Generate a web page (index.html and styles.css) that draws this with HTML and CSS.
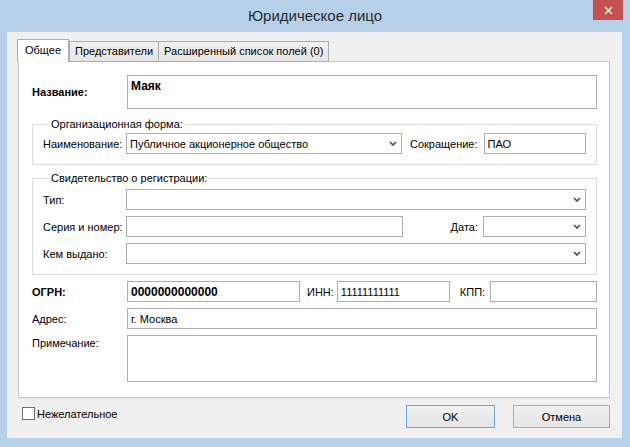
FILE: index.html
```html
<!DOCTYPE html>
<html lang="ru">
<head>
<meta charset="utf-8">
<title>Юридическое лицо</title>
<link rel="stylesheet" href="styles.css">
</head>
<body>
<div class="window">
  <div class="titlebar">
    <span class="title">Юридическое лицо</span>
    <div class="close"><svg width="9" height="9" viewBox="0 0 9 9"><path d="M1 1L8 8M8 1L1 8" stroke="#fff" stroke-width="1.4"/></svg></div>
  </div>
  <div class="client">
    <div class="tabs">
      <div class="tab active">Общее</div>
      <div class="tab">Представители</div>
      <div class="tab">Расширенный список полей (0)</div>
    </div>
    <div class="panel">
      <div class="row row-name">
        <div class="lbl bold">Название:</div>
        <div class="field area bold val">Маяк</div>
      </div>

      <fieldset class="group g1">
        <legend>Организационная форма:</legend>
        <div class="row">
          <div class="glbl">Наименование:</div>
          <div class="field select w-org"><span>Публичное акционерное общество</span><svg class="chev" width="8" height="5" viewBox="0 0 8 5"><path d="M1 1L4 4L7 1" fill="none" stroke="#4a4a4a" stroke-width="1.6"/></svg></div>
          <div class="mlbl">Сокращение:</div>
          <div class="field grow">ПАО</div>
        </div>
      </fieldset>

      <fieldset class="group g2">
        <legend>Свидетельство о регистрации:</legend>
        <div class="row">
          <div class="glbl">Тип:</div>
          <div class="field select grow"><span></span><svg class="chev" width="8" height="5" viewBox="0 0 8 5"><path d="M1 1L4 4L7 1" fill="none" stroke="#4a4a4a" stroke-width="1.6"/></svg></div>
        </div>
        <div class="row">
          <div class="glbl">Серия и номер:</div>
          <div class="field w-ser"></div>
          <div class="mlbl right">Дата:</div>
          <div class="field select w-date"><span></span><svg class="chev" width="8" height="5" viewBox="0 0 8 5"><path d="M1 1L4 4L7 1" fill="none" stroke="#4a4a4a" stroke-width="1.6"/></svg></div>
        </div>
        <div class="row">
          <div class="glbl">Кем выдано:</div>
          <div class="field select grow"><span></span><svg class="chev" width="8" height="5" viewBox="0 0 8 5"><path d="M1 1L4 4L7 1" fill="none" stroke="#4a4a4a" stroke-width="1.6"/></svg></div>
        </div>
      </fieldset>

      <div class="row row-ogrn">
        <div class="lbl bold">ОГРН:</div>
        <div class="field bold val w-ogrn">0000000000000</div>
        <div class="ilbl inn">ИНН:</div>
        <div class="field w-inn">11111111111</div>
        <div class="ilbl kpp">КПП:</div>
        <div class="field grow"></div>
      </div>
      <div class="row row-addr">
        <div class="lbl">Адрес:</div>
        <div class="field grow">г. Москва</div>
      </div>
      <div class="row row-note">
        <div class="lbl note-lbl">Примечание:</div>
        <div class="field grow note"></div>
      </div>
    </div>
    <div class="footer">
      <div class="check"><span class="box"></span><span>Нежелательное</span></div>
      <div class="buttons">
        <div class="btn default">OK</div>
        <div class="btn cancel">Отмена</div>
      </div>
    </div>
  </div>
</div>
</body>
</html>
```
FILE: styles.css
```css
* { box-sizing: border-box; }
body {
  margin: 0;
  font-family: "Liberation Sans", Arial, sans-serif;
  font-size: 11px;
  color: #000;
}
.window {
  width: 630px;
  height: 447px;
  background: #b6d0ea;
  display: flex;
  flex-direction: column;
  white-space: nowrap;
}
.titlebar {
  height: 32px;
  flex: none;
  display: flex;
  align-items: center;
  justify-content: center;
  position: relative;
}
.title {
  font-size: 15px;
  color: #2a2a2a;
  margin-top: -1px;
}
.close {
  position: absolute;
  top: 0;
  right: 7px;
  width: 30px;
  height: 20px;
  background: #c75050;
  display: flex;
  align-items: center;
  justify-content: center;
}
.client {
  flex: 1;
  margin: 0 8px 9px 7px;
  background: #f0f0f0;
  padding: 7px 12px 0 11px;
  display: flex;
  flex-direction: column;
}
.tabs {
  display: flex;
  align-items: flex-end;
  height: 23px;
  margin-bottom: -1px;
  position: relative;
  z-index: 1;
}
.tab {
  height: 21px;
  padding: 0 5px 1px 5px;
  border: 1px solid #acacac;
  background: linear-gradient(#f0f0f0, #e5e5e5);
  margin-left: -1px;
  display: flex;
  align-items: center;
}
.tab.active {
  height: 23px;
  background: #fff;
  border-bottom: none;
  padding: 0 7px 2px 7px;
  position: relative;
  z-index: 2;
}
.tab.active + .tab { margin-left: 0; }
.panel {
  height: 337px;
  flex: none;
  background: #fff;
  border: 1px solid #c4c4c4;
  padding: 13px 12px 13px 13px;
  display: flex;
  flex-direction: column;
}
.row {
  display: flex;
  align-items: center;
}
.lbl { width: 95px; flex: none; }
.bold { font-weight: 700; }
.val { font-size: 12px; }
.field {
  height: 21px;
  border: 1px solid #abadb3;
  background: #fff;
  padding: 0 3px;
  display: flex;
  align-items: center;
  flex: none;
}
.grow { flex: 1; }
.area {
  flex: 1;
  height: 34px;
  align-items: flex-start;
  padding-top: 3px;
}
.group {
  border: 1px solid #dcdcdc;
  margin: 8px 0 0 0;
  padding: 2px 10px 10px 10px;
  min-width: 0;
}
.group legend {
  padding: 0 2px;
  margin-left: 6px;
  line-height: 14px;
}
.g2 { margin-top: 6px; padding-top: 4px; }
.g2 .row + .row { margin-top: 6px; }
.glbl { width: 83px; flex: none; }
.select { justify-content: space-between; padding-right: 4px; }
.chev { flex: none; }
.w-org { width: 276px; }
.w-ser { width: 277px; }
.w-date { width: 103px; }
.mlbl { padding: 0 6px 0 8px; flex: none; }
.mlbl.right { flex: 1; text-align: right; padding: 0 5px 0 0; }
.row-ogrn { margin-top: 6px; }
.w-ogrn { width: 173px; }
.ilbl { flex: none; }
.inn { padding: 0 3px 0 7px; }
.w-inn { width: 113px; }
.kpp { padding: 0 5px 0 10px; }
.row-addr { margin-top: 6px; }
.row-note { margin-top: 6px; align-items: flex-start; }
.note { height: 47px; }
.note-lbl { padding-top: 2px; }
.footer {
  display: flex;
  justify-content: space-between;
  align-items: flex-start;
  padding-top: 7px;
}
.check {
  display: flex;
  align-items: center;
  margin: 2px 0 0 4px;
  gap: 2px;
}
.box {
  width: 13px;
  height: 13px;
  border: 1px solid #707070;
  background: #fff;
}
.buttons { display: flex; gap: 18px; }
.btn {
  height: 23px;
  border: 1px solid #acacac;
  background: linear-gradient(#f0f0f0, #e5e5e5);
  display: flex;
  align-items: center;
  justify-content: center;
}
.btn.default { width: 89px; border-color: #6ea5dc; }
.btn.cancel { width: 97px; }
```
